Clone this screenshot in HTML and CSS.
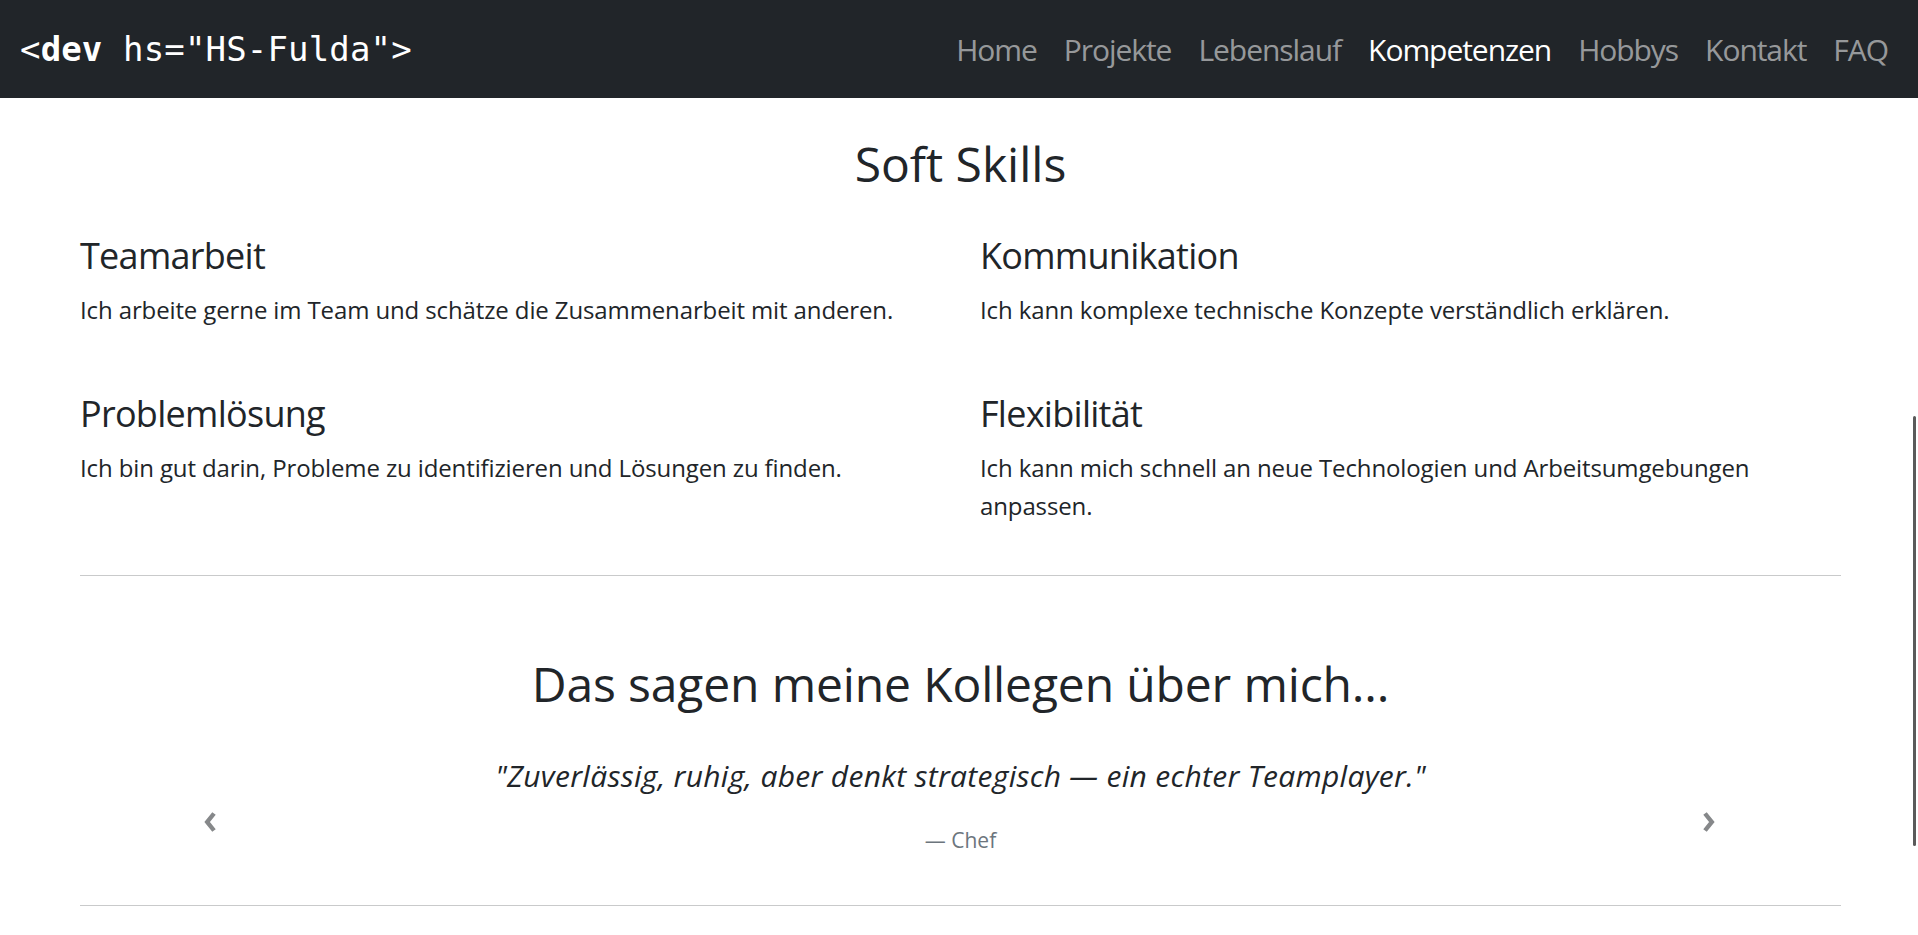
FILE: index.html
```html
<!DOCTYPE html>
<html lang="de">
<head>
<meta charset="utf-8">
<title>Kompetenzen</title>
<link rel="stylesheet" href="styles.css">
</head>
<body>
<header class="navbar">
  <a class="brand" href="#">&lt;<b>dev</b> hs="HS-Fulda"&gt;</a>
  <nav class="nav-links">
    <a class="nav-link" href="#">Home</a>
    <a class="nav-link" href="#">Projekte</a>
    <a class="nav-link" href="#">Lebenslauf</a>
    <a class="nav-link active" href="#">Kompetenzen</a>
    <a class="nav-link" href="#">Hobbys</a>
    <a class="nav-link" href="#">Kontakt</a>
    <a class="nav-link" href="#">FAQ</a>
  </nav>
</header>
<main class="container">
  <section class="soft-skills">
    <h2 class="section-title">Soft Skills</h2>
    <div class="skills-grid">
      <div class="skill">
        <h4 class="skill-title">Teamarbeit</h4>
        <p class="skill-text">Ich arbeite gerne im Team und schätze die Zusammenarbeit mit anderen.</p>
      </div>
      <div class="skill">
        <h4 class="skill-title">Kommunikation</h4>
        <p class="skill-text">Ich kann komplexe technische Konzepte verständlich erklären.</p>
      </div>
      <div class="skill">
        <h4 class="skill-title">Problemlösung</h4>
        <p class="skill-text">Ich bin gut darin, Probleme zu identifizieren und Lösungen zu finden.</p>
      </div>
      <div class="skill">
        <h4 class="skill-title">Flexibilität</h4>
        <p class="skill-text">Ich kann mich schnell an neue Technologien und Arbeitsumgebungen anpassen.</p>
      </div>
    </div>
  </section>
  <hr class="divider">
  <section class="testimonials">
    <h2 class="section-title">Das sagen meine Kollegen über mich...</h2>
    <div class="carousel">
      <button class="carousel-control prev" aria-label="Zurück">
        <svg viewBox="0 0 14 20" width="14" height="20"><path d="M11 1.5 L4.2 10 L11 18.5" fill="none" stroke="currentColor" stroke-width="4.4" stroke-linejoin="miter"/></svg>
      </button>
      <blockquote class="quote">
        <p class="quote-text">"Zuverlässig, ruhig, aber denkt strategisch — ein echter Teamplayer."</p>
        <footer class="quote-author">— Chef</footer>
      </blockquote>
      <button class="carousel-control next" aria-label="Weiter">
        <svg viewBox="0 0 14 20" width="14" height="20"><path d="M3 1.5 L9.8 10 L3 18.5" fill="none" stroke="currentColor" stroke-width="4.4" stroke-linejoin="miter"/></svg>
      </button>
    </div>
  </section>
  <hr class="divider">
</main>
<div class="scroll-thumb"></div>
</body>
</html>
```
FILE: styles.css
```css
* { box-sizing: border-box; }

html, body {
  margin: 0;
  padding: 0;
  overflow: hidden;
}

body {
  font-family: "Open Sans", "Noto Sans", sans-serif;
  font-size: 24px;
  line-height: 1.5;
  color: #212529;
  background: #fff;
}

.navbar {
  height: 98px;
  background: #212529;
  display: flex;
  align-items: center;
  justify-content: space-between;
  padding: 0 30px 0 20px;
}

.brand {
  font-family: "DejaVu Sans Mono", "Liberation Mono", monospace;
  font-size: 34px;
  line-height: 1.5;
  letter-spacing: 0.15px;
  color: #fff;
  text-decoration: none;
  white-space: pre;
}

.brand b { font-weight: bold; }

.nav-links {
  display: flex;
  align-items: center;
  gap: 27px;
}

.nav-link {
  font-size: 30px;
  line-height: 1.5;
  letter-spacing: -0.035em;
  color: rgba(255, 255, 255, 0.55);
  text-decoration: none;
}

.nav-link.active { color: #fff; }

.container {
  margin: 0 77px 0 80px;
}

.section-title {
  margin: 0;
  font-size: 48px;
  font-weight: 400;
  line-height: 1.2;
  text-align: center;
}

.soft-skills {
  padding: 37px 0 51px;
}

.soft-skills .section-title {
  margin-bottom: 41px;
}

.skills-grid {
  display: grid;
  grid-template-columns: 1fr 1fr;
  column-gap: 39px;
  row-gap: 64px;
}

.skill-title {
  margin: 0 0 14px;
  font-size: 36px;
  font-weight: 400;
  line-height: 1.2;
  letter-spacing: -0.02em;
}

.skill-text {
  margin: 0;
  line-height: 1.56;
  letter-spacing: -0.005em;
}

.divider {
  margin: 0;
  border: 0;
  border-top: 1px solid #c9cacb;
}

.testimonials {
  padding: 79px 0 49px;
}

.testimonials .section-title {
  margin-bottom: 40px;
  letter-spacing: -0.003em;
}

.carousel {
  position: relative;
}

.quote {
  margin: 0;
  text-align: center;
}

.quote-text {
  margin: 0 0 27px;
  font-size: 30px;
  font-style: italic;
  line-height: 1.5;
  letter-spacing: 0.01em;
}

.quote-author {
  font-size: 21px;
  line-height: 1.5;
  color: #6c757d;
}

.carousel-control {
  position: absolute;
  top: 59px;
  width: 14px;
  height: 20px;
  padding: 0;
  border: 0;
  background: none;
  color: #86888a;
  display: flex;
}

.carousel-control.prev { left: 123px; }
.carousel-control.next { right: 125px; }

.scroll-thumb {
  position: fixed;
  right: 2px;
  top: 416px;
  width: 3px;
  height: 430px;
  background: #5a5a5a;
  border-radius: 2px;
}
```
